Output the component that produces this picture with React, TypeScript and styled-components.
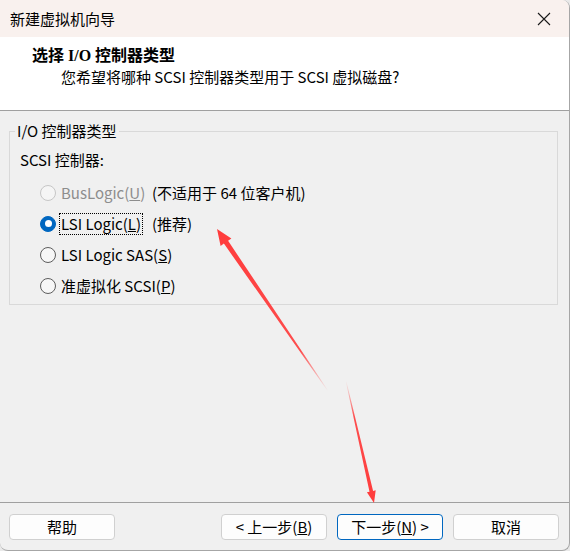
import React from 'react';
import styled, { createGlobalStyle } from 'styled-components';

const GlobalStyle = createGlobalStyle`
  html, body {
    margin: 0;
    padding: 0;
    background: #e9e9e9;
  }
  body {
    font-family: "Noto Sans CJK SC", "Noto Sans", sans-serif;
    font-size: 15px;
    color: #000;
  }
`;

const Window = styled.div`
  position: relative;
  width: 570px;
  height: 551px;
  box-sizing: border-box;
  display: flex;
  flex-direction: column;
  background: #f0f0f0;
  border: 1px solid #a6a6a6;
  border-left: none;
  border-top: none;
  border-radius: 0 8px 8px 8px;
  overflow: hidden;
`;

const TitleBar = styled.div`
  height: 37px;
  flex: none;
  display: flex;
  align-items: center;
  justify-content: space-between;
  padding: 0 17px 0 10px;
  background: #f9f1ee;
  font-size: 15px;
  line-height: 20px;
`;

const CloseButton = styled.span`
  display: flex;
  width: 16px;
  height: 16px;
`;

const Header = styled.div`
  height: 73px;
  flex: none;
  box-sizing: content-box;
  background: #fff;
  border-bottom: 1px solid #a0a0a0;
`;

const HeaderTitle = styled.div`
  margin: 8px 0 0 32px;
  font-family: "Liberation Serif", "Noto Sans CJK SC", serif;
  font-weight: bold;
  font-size: 16px;
  line-height: 22px;
`;

const HeaderSub = styled.div`
  margin-left: 61px;
  line-height: 20px;
`;

const Body = styled.div`
  flex: 1;
  padding: 10px 11px 0 9px;
`;

const GroupBox = styled.fieldset`
  margin: 0;
  padding: 0 0 3px 0;
  border: 1px solid #d9d9d9;
  min-width: 0;
`;

const GroupLegend = styled.legend`
  margin-left: 5px;
  padding: 0 2px;
  line-height: 20px;
`;

const FieldLabel = styled.div`
  margin-top: 9px;
  padding-left: 10px;
  line-height: 20px;
`;

const RadioList = styled.div`
  margin-top: 7px;
  display: flex;
  flex-direction: column;
`;

const RadioRow = styled.div`
  height: 31px;
  display: grid;
  grid-template-columns: 16px 96px auto;
  align-items: center;
  padding-left: 30px;
`;

const RadioCircle = styled.span<{ $checked?: boolean; $disabled?: boolean }>`
  width: 16px;
  height: 16px;
  box-sizing: border-box;
  border-radius: 50%;
  display: flex;
  align-items: center;
  justify-content: center;
  border: 1px solid
    ${(p) => (p.$checked ? '#0067c0' : p.$disabled ? '#c6c6c6' : '#5d5d5d')};
  background: ${(p) => (p.$checked ? '#0067c0' : p.$disabled ? '#f5f5f5' : '#f7f7f7')};

  &::after {
    content: '';
    display: ${(p) => (p.$checked ? 'block' : 'none')};
    width: 7px;
    height: 7px;
    border-radius: 50%;
    background: #fff;
  }
`;

const ChoiceCell = styled.span`
  padding-left: 4px;
  white-space: nowrap;
`;

const ChoiceText = styled.span<{ $disabled?: boolean; $focused?: boolean }>`
  display: inline-block;
  line-height: 20px;
  padding: 0 1px;
  color: ${(p) => (p.$disabled ? '#8d8d8d' : '#000')};
  outline: ${(p) => (p.$focused ? '1px dotted #000' : 'none')};
`;

const Note = styled.span`
  white-space: nowrap;
  line-height: 20px;
`;

const Footer = styled.div`
  flex: none;
  border-top: 1px solid #a0a0a0;
  display: flex;
  align-items: flex-start;
  gap: 10px;
  padding: 11px 10px 10px 9px;
  height: 26px;
  box-sizing: content-box;
`;

const Button = styled.button<{ $primary?: boolean }>`
  width: 106px;
  height: 26px;
  padding: 0;
  box-sizing: border-box;
  font-family: inherit;
  font-size: 15px;
  line-height: 20px;
  color: #000;
  background: #fdfdfd;
  border: 1px solid ${(p) => (p.$primary ? '#0067c0' : '#d0d0d0')};
  border-radius: 4px;
`;

const Spacer = styled.span`
  flex: 1;
`;

const Annotations = styled.svg`
  position: absolute;
  left: 0;
  top: 0;
  pointer-events: none;
`;

type Choice = {
  label: string;
  key: string;
  note?: string;
  checked?: boolean;
  disabled?: boolean;
};

const choices: Choice[] = [
  { label: 'BusLogic', key: 'U', note: '(不适用于 64 位客户机)', disabled: true },
  { label: 'LSI Logic', key: 'L', note: '(推荐)', checked: true },
  { label: 'LSI Logic SAS', key: 'S' },
  { label: '准虚拟化 SCSI', key: 'P' },
];

const Accel = ({ text, k }: { text: string; k: string }) => (
  <>
    {text}(<u>{k}</u>)
  </>
);

export default function App() {
  return (
    <>
      <GlobalStyle />
      <Window>
        <TitleBar>
          <span>新建虚拟机向导</span>
          <CloseButton>
            <svg width="16" height="16" viewBox="0 0 16 16">
              <path d="M2 2 L14 14 M14 2 L2 14" stroke="#1a1a1a" strokeWidth="1.1" />
            </svg>
          </CloseButton>
        </TitleBar>

        <Header>
          <HeaderTitle>选择 I/O 控制器类型</HeaderTitle>
          <HeaderSub>您希望将哪种 SCSI 控制器类型用于 SCSI 虚拟磁盘?</HeaderSub>
        </Header>

        <Body>
          <GroupBox>
            <GroupLegend>I/O 控制器类型</GroupLegend>
            <FieldLabel>SCSI 控制器:</FieldLabel>
            <RadioList>
              {choices.map((c) => (
                <RadioRow key={c.key}>
                  <RadioCircle $checked={c.checked} $disabled={c.disabled} />
                  <ChoiceCell>
                    <ChoiceText $disabled={c.disabled} $focused={c.checked}>
                      <Accel text={c.label} k={c.key} />
                    </ChoiceText>
                  </ChoiceCell>
                  {c.note && <Note>{c.note}</Note>}
                </RadioRow>
              ))}
            </RadioList>
          </GroupBox>
        </Body>

        <Footer>
          <Button>帮助</Button>
          <Spacer />
          <Button>
            &lt; 上一步(<u>B</u>)
          </Button>
          <Button $primary>
            下一步(<u>N</u>) &gt;
          </Button>
          <Button>取消</Button>
        </Footer>

        <Annotations width="570" height="551" viewBox="0 0 570 551">
          <defs>
            <linearGradient id="fadeUp" gradientUnits="userSpaceOnUse" x1="328" y1="391" x2="217" y2="229">
              <stop offset="0" stopColor="#ff3b3b" stopOpacity="0" />
              <stop offset="0.25" stopColor="#ff3b3b" stopOpacity="0.9" />
              <stop offset="1" stopColor="#ff3b3b" />
            </linearGradient>
            <linearGradient id="fadeDown" gradientUnits="userSpaceOnUse" x1="346" y1="381" x2="374" y2="503">
              <stop offset="0" stopColor="#ff3b3b" stopOpacity="0" />
              <stop offset="0.3" stopColor="#ff3b3b" stopOpacity="0.9" />
              <stop offset="1" stopColor="#ff3b3b" />
            </linearGradient>
          </defs>
          <polygon
            fill="url(#fadeUp)"
            points="328.2,390.8 228.1,240.8 231.4,238.5 217,229 220.6,245.9 223.9,243.6 327.8,391.2"
          />
          <polygon
            fill="url(#fadeDown)"
            points="346.3,380.9 373.1,490.9 375.7,490.3 374,503 366.9,492.3 369.5,491.7 345.7,381.1"
          />
        </Annotations>
      </Window>
    </>
  );
}
